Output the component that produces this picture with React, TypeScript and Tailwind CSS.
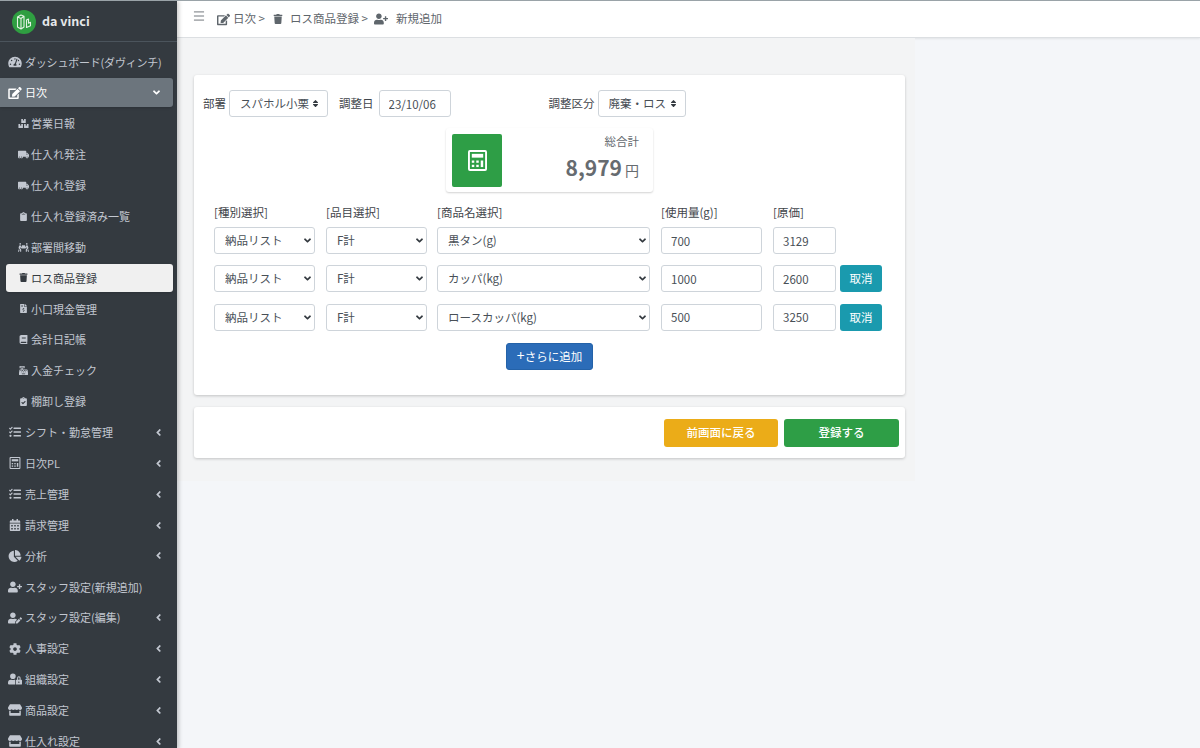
import type { ComponentType, ReactNode } from 'react'
import { Menu } from 'lucide-react'
import {
  FaAngleDown,
  FaAngleLeft,
  FaBook,
  FaBoxes,
  FaCalendarAlt,
  FaCashRegister,
  FaChartPie,
  FaClipboard,
  FaClipboardCheck,
  FaCog,
  FaEdit,
  FaFileInvoiceDollar,
  FaPeopleCarry,
  FaSort,
  FaStore,
  FaTachometerAlt,
  FaTasks,
  FaTrash,
  FaTruckMoving,
  FaUserEdit,
  FaUserLock,
  FaUserPlus,
} from 'react-icons/fa'

type IconType = ComponentType<{ className?: string }>

function CalcIcon({ className }: { className?: string }) {
  return (
    <svg viewBox="0 0 20 22" fill="currentColor" className={className}>
      <path
        fillRule="evenodd"
        d="M2 0h16a2 2 0 0 1 2 2v18a2 2 0 0 1-2 2H2a2 2 0 0 1-2-2V2a2 2 0 0 1 2-2Zm0 2v18h16V2H2Z"
      />
      <rect x="4" y="4" width="12" height="4" />
      <rect x="4" y="11" width="2.6" height="2.4" />
      <rect x="8.7" y="11" width="2.6" height="2.4" />
      <rect x="4" y="15.5" width="2.6" height="2.4" />
      <rect x="8.7" y="15.5" width="2.6" height="2.4" />
      <rect x="13.4" y="11" width="2.6" height="6.9" />
    </svg>
  )
}

const topMenu: { icon: IconType; label: string; arrow?: boolean }[] = [
  { icon: FaTasks, label: 'シフト・勤怠管理', arrow: true },
  { icon: CalcIcon, label: '日次PL', arrow: true },
  { icon: FaTasks, label: '売上管理', arrow: true },
  { icon: FaCalendarAlt, label: '請求管理', arrow: true },
  { icon: FaChartPie, label: '分析', arrow: true },
  { icon: FaUserPlus, label: 'スタッフ設定(新規追加)' },
  { icon: FaUserEdit, label: 'スタッフ設定(編集)', arrow: true },
  { icon: FaCog, label: '人事設定', arrow: true },
  { icon: FaUserLock, label: '組織設定', arrow: true },
  { icon: FaStore, label: '商品設定', arrow: true },
  { icon: FaStore, label: '仕入れ設定', arrow: true },
]

const subMenu: { icon: IconType; label: string; active?: boolean }[] = [
  { icon: FaBoxes, label: '営業日報' },
  { icon: FaTruckMoving, label: '仕入れ発注' },
  { icon: FaTruckMoving, label: '仕入れ登録' },
  { icon: FaClipboard, label: '仕入れ登録済み一覧' },
  { icon: FaPeopleCarry, label: '部署間移動' },
  { icon: FaTrash, label: 'ロス商品登録', active: true },
  { icon: FaFileInvoiceDollar, label: '小口現金管理' },
  { icon: FaBook, label: '会計日記帳' },
  { icon: FaCashRegister, label: '入金チェック' },
  { icon: FaClipboardCheck, label: '棚卸し登録' },
]

const rows = [
  { name: '黒タン(g)', qty: '700', cost: '3129', cancel: false },
  { name: 'カッパ(kg)', qty: '1000', cost: '2600', cancel: true },
  { name: 'ロースカッパ(kg)', qty: '500', cost: '3250', cancel: true },
]

function Logo() {
  return (
    <svg viewBox="0 0 24 24" className="h-[24px] w-[24px] shrink-0">
      <circle cx="12" cy="12" r="12" fill="#2f9e41" />
      <path
        d="M5.5 7 9 5l3 1.2V17l-3 2-3.5-2V7Zm0 0L9 8.5V19M9 8.5l3-2.3M14.5 10v7.5l4-1.8v-3.4l-2 .9V9l-2 1Z"
        fill="none"
        stroke="#e3f3e4"
        strokeWidth="1.1"
        strokeLinejoin="round"
      />
    </svg>
  )
}

function Sidebar() {
  return (
    <aside className="relative z-10 flex h-[748px] w-[177px] shrink-0 flex-col overflow-hidden bg-[#343a40] text-[11px] text-[#c2c7d0] shadow-[2px_0_4px_rgba(0,0,0,0.2)]">
      <div className="flex h-[41px] shrink-0 items-center gap-[6px] border-b border-[#4b545c] pl-[12px] pt-[1px]">
        <Logo />
        <span className="text-[12.5px] font-bold text-[#e6e8ea]">da vinci</span>
      </div>
      <div className="mt-[5px] flex flex-col">
        <div className="mb-[1px] flex h-[30px] items-center gap-[3px] pl-[8px]">
          <FaTachometerAlt className="w-[14px] shrink-0 text-[12px]" />
          <span className="tracking-[-0.2px]">ダッシュボード(ダヴィンチ)</span>
        </div>
        <div className="mr-[4px] flex h-[29px] items-center justify-between rounded-r-[3px] bg-[#6c757d] pl-[8px] pr-[11px] text-white shadow-sm">
          <span className="flex items-center gap-[3px]">
            <FaEdit className="w-[14px] text-[12px]" />
            日次
          </span>
          <FaAngleDown className="text-[11px]" />
        </div>
        <div className="mt-[1px]">
          {subMenu.map((item) => {
            const Icon = item.icon
            return (
              <div key={item.label} className="flex h-[30.9px] items-center">
                <div
                  className={
                    item.active
                      ? 'ml-[6px] mr-[4px] flex h-[28px] w-full items-center gap-[2px] rounded-[3px] bg-[#f0f0f0] pl-[12px] text-[#343a40] shadow-sm'
                      : 'ml-[6px] mr-[4px] flex h-[28px] w-full items-center gap-[2px] pl-[12px]'
                  }
                >
                  <Icon className="h-[9px] w-[11px] shrink-0" />
                  <span>{item.label}</span>
                </div>
              </div>
            )
          })}
        </div>
        {topMenu.map((item) => {
          const Icon = item.icon
          return (
            <div key={item.label} className="flex h-[30.9px] items-center justify-between pl-[8px] pr-[13px]">
              <span className="flex items-center gap-[3px] whitespace-nowrap">
                <Icon className="h-[12px] w-[14px] shrink-0" />
                {item.label}
              </span>
              {item.arrow && <FaAngleLeft className="text-[11px]" />}
            </div>
          )
        })}
      </div>
    </aside>
  )
}

function Crumbs() {
  return (
    <header className="flex h-[37px] shrink-0 items-center border-b border-[#dcdfe2] bg-white pl-[15px] text-[11.5px] text-[#5f666c] shadow-[0_1px_2px_rgba(0,0,0,0.08)]">
      <Menu className="mb-[7px] h-[14px] w-[14px]" strokeWidth={1.5} />
      <FaEdit className="ml-[11px] text-[13px]" />
      <span className="ml-[3px]">日次 &gt;</span>
      <FaTrash className="ml-[8px] text-[10px]" />
      <span className="ml-[7px]">ロス商品登録 &gt;</span>
      <FaUserPlus className="ml-[6px] text-[14px]" />
      <span className="ml-[8px]">新規追加</span>
    </header>
  )
}

function Select({ value, width, sort }: { value: string; width: string; sort?: boolean }) {
  return (
    <div className={`relative ${width}`}>
      <select
        defaultValue={value}
        className="h-[27px] w-full appearance-none rounded-[3px] border border-[#ced4da] bg-white pl-[10px] text-[11.5px] text-[#495057] outline-none"
      >
        <option>{value}</option>
      </select>
      {sort ? (
        <FaSort className="pointer-events-none absolute right-[8px] top-[9px] text-[9px] text-[#343a40]" />
      ) : (
        <FaAngleDown className="pointer-events-none absolute right-[2px] top-[8px] text-[11px] text-[#343a40]" />
      )}
    </div>
  )
}

function Input({ value, width }: { value: string; width: string }) {
  return (
    <input
      defaultValue={value}
      className={`h-[27px] ${width} rounded-[3px] border border-[#ced4da] bg-white pl-[9px] text-[11.5px] text-[#495057] outline-none`}
    />
  )
}

function Card({ children, className }: { children: ReactNode; className: string }) {
  return <div className={`rounded-[3px] bg-white shadow-[0_1px_3px_rgba(0,0,0,0.2)] ${className}`}>{children}</div>
}

function Form() {
  return (
    <Card className="h-[320px] pl-[9px] pt-[15px]">
      <div className="flex items-center">
        <span>部署</span>
        <div className="ml-[3px]">
          <Select value="スパホル小栗" width="w-[99px]" sort />
        </div>
        <span className="ml-[11px]">調整日</span>
        <div className="ml-[5px]">
          <Input value="23/10/06" width="w-[72px]" />
        </div>
        <span className="ml-[98px]">調整区分</span>
        <div className="ml-[3px]">
          <Select value="廃棄・ロス" width="w-[88px]" sort />
        </div>
      </div>

      <div className="ml-[243px] mt-[11px] flex h-[64px] w-[207px] rounded-[3px] p-[6px] shadow-[0_1px_2px_rgba(0,0,0,0.18)]">
        <div className="flex h-[53px] w-[50px] items-center justify-center rounded-[2px] bg-[#2e9e46] text-white">
          <CalcIcon className="h-[21px] w-[19px]" />
        </div>
        <div className="flex-1 pr-[8px] text-right text-[#666b70]">
          <div className="text-[11.5px] leading-[14px]">総合計</div>
          <div className="mt-[5px] leading-[28px]">
            <span className="text-[21px] font-bold">8,979</span>
            <span className="ml-[3px] text-[14px]">円</span>
          </div>
        </div>
      </div>

      <div className="ml-[11px] mt-[12px] flex text-[11.5px] leading-[16px]">
        <span className="w-[112px]">[種別選択]</span>
        <span className="w-[111px]">[品目選択]</span>
        <span className="w-[224px]">[商品名選択]</span>
        <span className="w-[112px]">[使用量(g)]</span>
        <span>[原価]</span>
      </div>
      <div className="ml-[11px] mt-[7px] flex flex-col gap-[11.4px]">
        {rows.map((row) => (
          <div key={row.name} className="flex">
            <Select value="納品リスト" width="w-[101px]" />
            <div className="ml-[11px]">
              <Select value="F計" width="w-[101px]" />
            </div>
            <div className="ml-[10px]">
              <Select value={row.name} width="w-[213px]" />
            </div>
            <Input value={row.qty} width="ml-[11px] w-[101px]" />
            <div className="ml-[11px] flex gap-[4px]">
              <Input value={row.cost} width="w-[63px]" />
              {row.cancel && (
                <button className="h-[27px] w-[42px] rounded-[3px] bg-[#1a9aae] text-[11.5px] text-white">取消</button>
              )}
            </div>
          </div>
        ))}
      </div>
      <div className="ml-[303px] mt-[12px]">
        <button className="h-[27px] w-[87px] rounded-[3px] border border-[#2462a8] bg-[#2b6cb8] text-[11.5px] text-white">
          <span className="text-[14px] leading-none">+</span>さらに追加
        </button>
      </div>
    </Card>
  )
}

export default function App() {
  return (
    <div
      className="flex h-[748px] w-[1200px] overflow-hidden border-t border-[#9aa3a8] bg-[#f4f6f9] text-[11.5px] text-[#3f454b]"
      style={{ fontFamily: '"Noto Sans CJK JP", "Noto Sans", sans-serif' }}
    >
      <Sidebar />
      <main className="flex min-w-0 flex-1 flex-col">
        <Crumbs />
        <div className="h-[443px] w-[738px] bg-[#f3f4f5] pl-[17px] pr-[10px] pt-[37px]">
          <Form />
          <Card className="mt-[12px] flex h-[51px] items-center justify-end gap-[6px] pr-[6px]">
            <button className="h-[28px] w-[114px] rounded-[3px] bg-[#ebac18] font-medium text-white">前画面に戻る</button>
            <button className="h-[28px] w-[115px] rounded-[3px] bg-[#2e9e46] font-medium text-white">登録する</button>
          </Card>
        </div>
      </main>
    </div>
  )
}
